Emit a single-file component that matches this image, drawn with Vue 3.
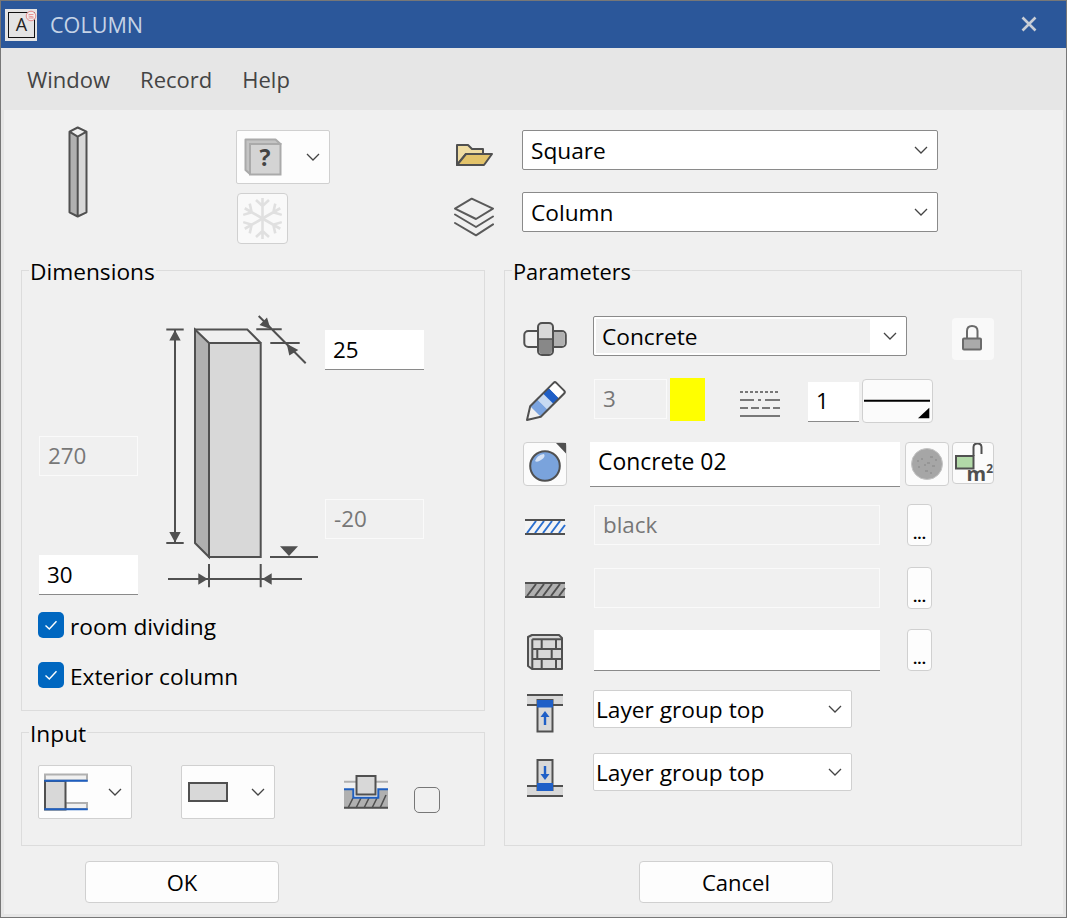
<template>
  <div class="window">
    <svg class="defs">
      <defs>
        <symbol id="chev" viewBox="0 0 14 8">
          <path d="M1 1 L7 7 L13 1" fill="none" stroke="#444" stroke-width="1.3" />
        </symbol>
      </defs>
    </svg>

    <div class="titlebar">
      <div class="app-icon">
        <span class="app-letter">A</span>
        <svg class="app-badge" viewBox="0 0 12 12">
          <circle cx="6" cy="6" r="4.8" fill="#eee" stroke="#e58a8a" stroke-width="1" />
          <path d="M3.5 4.5 H8.5 M3.5 6 L8.5 7 M3.5 8 H8.5" stroke="#e58a8a" stroke-width="0.9" fill="none" />
        </svg>
      </div>
      <span class="title">COLUMN</span>
      <svg class="close" viewBox="0 0 16 16">
        <path d="M1.5 1.5 L14.5 14.5 M14.5 1.5 L1.5 14.5" stroke="#c9ced6" stroke-width="2.6" />
      </svg>
    </div>

    <div class="menu">
      <span>Window</span>
      <span>Record</span>
      <span>Help</span>
    </div>

    <div class="content">
      <div class="top">
        <svg class="col-icon" viewBox="68 126 20 92">
          <path d="M69.5 131.7 L77.7 136.7 V216.5 L69.5 212.3 Z" fill="#b0b0b0" />
          <path d="M86.5 131.7 L77.7 136.7 V216.5 L86.5 212.3 Z" fill="#d8d8d8" />
          <path d="M69.5 131.7 L77.7 127.5 L86.5 131.7 L77.7 136.7 Z M69.5 131.7 V212.3 L77.7 216.5 L86.5 212.3 V131.7 M77.7 136.7 V216.5" fill="none" stroke="#505050" stroke-width="2" stroke-linejoin="round" />
        </svg>

        <div class="tools">
          <div class="split split-q">
            <svg class="q-icon" viewBox="244 138 38 38">
              <path d="M245.5 139.5 H275.5 L280.5 144 H250 V174 L245.5 170 Z" fill="#c4c4c4" stroke="#aaa" stroke-width="2" stroke-linejoin="round" />
              <rect x="250" y="144" width="30.5" height="30.5" fill="#d4d4d4" stroke="#aaa" stroke-width="2" />
              <text x="265" y="166" text-anchor="middle" class="q-mark">?</text>
            </svg>
            <svg class="chev"><use href="#chev" /></svg>
          </div>
          <div class="freeze">
            <svg viewBox="-24.5 -24.5 49 49" width="49" height="49">
              <g v-for="a in [0, 60, 120, 180, 240, 300]" :key="a" :transform="`rotate(${a})`">
                <path d="M0 0 V-20.5 M-6.5 -18.5 L0 -12.5 L6.5 -18.5" fill="none" stroke="#e0e0e0" stroke-width="2.6" />
              </g>
            </svg>
          </div>
        </div>

        <div class="picks">
          <div class="pick">
            <svg class="pick-icon" viewBox="454 130 40 40">
              <path d="M457 165 V145 H468 L472 149 H483 V154 H466 L457 165 Z" fill="#efdca2" stroke="#505050" stroke-width="2" stroke-linejoin="round" />
              <path d="M457 165 L466 154 H492 L484 165 Z" fill="#e3c36a" stroke="#505050" stroke-width="2" stroke-linejoin="round" />
            </svg>
            <div class="select">Square<svg class="chev"><use href="#chev" /></svg></div>
          </div>
          <div class="pick">
            <svg class="pick-icon tall" viewBox="454 192 40 46">
              <path d="M471.7 198.7 L493 208.7 L476 219 L455 208.7 Z" fill="none" stroke="#5a5a5a" stroke-width="2" stroke-linejoin="round" />
              <path d="M455 214.5 L476 227 L493 216.5 M455 223 L476 235.3 L493 224.3" fill="none" stroke="#5a5a5a" stroke-width="2" stroke-linejoin="round" stroke-linecap="round" />
            </svg>
            <div class="select">Column<svg class="chev"><use href="#chev" /></svg></div>
          </div>
        </div>
      </div>

      <div class="main">
        <div class="left">
          <section class="group dims">
            <div class="legend">Dimensions</div>
            <div class="canvas">
              <svg class="drawing" viewBox="22 271 462 335" width="462" height="335">
                <g stroke="#505050" stroke-width="2" fill="none">
                  <path d="M195 329.5 L209 343 V557 L195 543 Z" fill="#b0b0b0" />
                  <rect x="209" y="343" width="51.7" height="214" fill="#d8d8d8" />
                  <path d="M195 329.5 H247.3 L260.7 343" />
                  <path d="M175 330 V543 M166.3 329.5 H183.7 M166.3 543 H183.7" />
                  <path d="M256.3 329.3 H281.7 M270.3 343 H299.7 M258.7 316 L305.7 363.3" />
                  <path d="M209 564 V587.3 M260.7 564 V587.3 M168 579 H302" />
                  <path d="M270 557 H318" />
                </g>
                <g fill="#505050">
                  <path d="M175 330 L169.3 340.5 H180.7 Z M175 542.5 L169.3 532 H180.7 Z" />
                  <path d="M270.5 329 L267 317.5 L259.5 325 Z M286.7 343.7 L298.3 350 L289.3 355.5 Z" />
                  <path d="M207.7 579 L198.3 573.3 V584.7 Z M262.3 579 L271.7 573.3 V584.7 Z" />
                  <path d="M280 546.3 H298 L289 556 Z" />
                </g>
              </svg>
              <div class="field at-25">25</div>
              <div class="field off at-270">270</div>
              <div class="field off at-20">-20</div>
              <div class="field at-30">30</div>
            </div>
            <div class="checks">
              <label class="check">
                <span class="box on">
                  <svg viewBox="0 0 14 14" width="14" height="14"><path d="M1.5 7.5 L5.3 11 L12.5 3.2" fill="none" stroke="#fff" stroke-width="1.4" /></svg>
                </span>
                <span>room dividing</span>
              </label>
              <label class="check">
                <span class="box on">
                  <svg viewBox="0 0 14 14" width="14" height="14"><path d="M1.5 7.5 L5.3 11 L12.5 3.2" fill="none" stroke="#fff" stroke-width="1.4" /></svg>
                </span>
                <span>Exterior column</span>
              </label>
            </div>
          </section>

          <section class="group input">
            <div class="legend">Input</div>
            <div class="split split-a">
              <svg class="split-icon" viewBox="42 772 46 40">
                <rect x="44" y="774.5" width="42" height="6" fill="#f0f0f0" stroke="#b0b0b0" stroke-width="2" />
                <rect x="64.5" y="803" width="21.5" height="6" fill="#f0f0f0" stroke="#b0b0b0" stroke-width="2" />
                <rect x="44" y="781" width="20.5" height="28.5" fill="#d8d8d8" stroke="#505050" stroke-width="2" />
                <path d="M43.3 780.8 H86.7 M43.3 809.3 H86.7" stroke="#1f5fc0" stroke-width="2" />
              </svg>
              <svg class="chev"><use href="#chev" /></svg>
            </div>
            <div class="split split-b">
              <svg class="split-icon" viewBox="186 772 46 40">
                <rect x="189" y="783" width="38" height="18" fill="#d8d8d8" stroke="#505050" stroke-width="2" />
              </svg>
              <svg class="chev"><use href="#chev" /></svg>
            </div>
            <svg class="found-icon" viewBox="343 774 46 36">
              <path d="M344 789.3 H353.3 V797.7 H378.3 V789.3 H388 V808.3 H344 Z" fill="#b0b0b0" />
              <path d="M348 808 L353 798 M356 808 L361 798 M364 808 L369 798 M372 808 L377 798 M380 808 L386 795" stroke="#505050" stroke-width="1.6" />
              <path d="M344 807.8 H388" stroke="#505050" stroke-width="2" />
              <path d="M344 781.7 H388" stroke="#b0b0b0" stroke-width="2" />
              <path d="M344 789.3 H353.3 V797.7 H378.3 V789.3 H388" fill="none" stroke="#1f5fc0" stroke-width="2" />
              <rect x="356.5" y="776" width="19" height="18.5" fill="#d8d8d8" stroke="#505050" stroke-width="2" />
            </svg>
            <span class="box empty"></span>
          </section>
        </div>

        <section class="group params">
          <div class="legend legend-params">Parameters</div>
          <div class="rows">
            <div class="row">
              <svg class="p-icon" viewBox="522 316 46 46">
                <rect x="524.3" y="331" width="41.5" height="16" rx="4" fill="#f0f0f0" stroke="#505050" stroke-width="2" />
                <path d="M552 332 H561.5 Q564.8 332 564.8 335 V343 Q564.8 346 561.5 346 H552 Z" fill="#b0b0b0" />
                <rect x="538" y="323" width="15" height="32" rx="4" fill="#d8d8d8" stroke="#505050" stroke-width="2" />
                <path d="M539 339 H552 V350 Q552 354 549 354 H542 Q539 354 539 350 Z" fill="#888" />
                <path d="M538 339 H553" stroke="#505050" stroke-width="1.5" />
              </svg>
              <div class="select concrete">
                <span class="sel-text">Concrete</span>
                <svg class="chev"><use href="#chev" /></svg>
              </div>
              <div class="btn-lock">
                <svg viewBox="0 0 42 42" width="42" height="42">
                  <path d="M15 21 V13 Q15 8 20 8 Q25.5 8 25.5 13 V21" fill="none" stroke="#6a6a6a" stroke-width="2" />
                  <rect x="11" y="20.5" width="18" height="11" rx="1" fill="#aaa" stroke="#6a6a6a" stroke-width="2" />
                </svg>
              </div>
            </div>

            <div class="row">
              <svg class="p-icon" viewBox="522 378 46 46">
                <g transform="translate(527 420) rotate(-45)">
                  <path d="M0 0 L12 -7.5 V7.5 Z" fill="#f0f0f0" />
                  <rect x="12" y="-7.5" width="10" height="15" fill="#7ba4e0" />
                  <rect x="22" y="-7.5" width="8" height="15" fill="#c8daf2" />
                  <rect x="30" y="-7.5" width="8" height="15" fill="#1f5fc7" />
                  <rect x="38" y="-7.5" width="9" height="15" fill="#fff" />
                  <path d="M0 0 L12 -7.5 H45 Q47 -7.5 47 -5.5 V5.5 Q47 7.5 45 7.5 H12 Z" fill="none" stroke="#505050" stroke-width="2" stroke-linejoin="round" />
                </g>
              </svg>
              <div class="field off pen-num">3</div>
              <div class="swatch"></div>
              <svg class="line-icon" viewBox="0 0 40 28">
                <path d="M0 2 H40" stroke="#505050" stroke-width="1.6" stroke-dasharray="3 2" />
                <path d="M0 10 H14 M18 10 H21 M25 10 H40" stroke="#505050" stroke-width="1.6" fill="none" />
                <path d="M0 18 H40" stroke="#505050" stroke-width="1.6" stroke-dasharray="8 3" />
                <path d="M0 26 H40" stroke="#505050" stroke-width="1.6" />
              </svg>
              <div class="field line-num">1</div>
              <div class="btn-line">
                <svg viewBox="863 380 69 42" width="69" height="42">
                  <path d="M864 400.7 H930" stroke="#000" stroke-width="2" />
                  <path d="M918 418.3 H929.3 V407.7 Z" fill="#000" />
                </svg>
              </div>
            </div>

            <div class="row">
              <div class="btn-mat">
                <svg viewBox="524 444 42 42" width="42" height="42">
                  <circle cx="545" cy="467" r="14.8" fill="#7aa3dc" stroke="#505050" stroke-width="2" />
                  <path d="M535 462 Q537 456 544 455 Q546 458 541 461 Q537 464 535 462 Z" fill="#d6e3f6" />
                  <path d="M556 444 H566 V454.5 Z" fill="#505050" />
                </svg>
              </div>
              <div class="field mat-name">Concrete 02</div>
              <div class="btn-tex">
                <svg viewBox="-21 -21 42 42" width="42" height="42">
                  <circle r="15.5" fill="#a6a6a6" stroke="#c4c4c4" stroke-width="1" />
                  <path d="M-6 -5 h2 M3 -7 h3 M-9 3 h2 M5 2 h3 M-2 7 h3 M0 -1 h3 M-3 1 h2 M-10 -3 h2 M8 -4 h2 M3 9 h2" stroke="#919191" stroke-width="1.6" />
                </svg>
              </div>
              <div class="btn-m2">
                <svg viewBox="953 444 40 40" width="40" height="40">
                  <path d="M973.5 457 V448 Q973.5 444.5 977.5 444.5 Q981.5 444.5 981.5 448 V455" fill="none" stroke="#505050" stroke-width="2" />
                  <rect x="956" y="457" width="17.5" height="12.5" fill="#b2d9a8" stroke="#505050" stroke-width="2" />
                </svg>
                <span class="m2">m<sup>2</sup></span>
              </div>
            </div>

            <div class="row">
              <svg class="p-icon" viewBox="522 504 46 46">
                <rect x="525" y="520" width="40" height="14" fill="#f4f4f4" />
                <path d="M527 533 L536 521 M535 533 L544 521 M543 533 L552 521 M551 533 L560 521 M559 533 L565 525" stroke="#2a6fd0" stroke-width="2" />
                <path d="M525 520 H565 M525 534 H565" stroke="#505050" stroke-width="2" />
              </svg>
              <div class="field off wide">black</div>
              <div class="btn-more"><span>...</span></div>
            </div>

            <div class="row">
              <svg class="p-icon" viewBox="522 567 46 46">
                <rect x="525" y="583" width="40" height="14" fill="#b0b0b0" />
                <path d="M527 596 L536 584 M535 596 L544 584 M543 596 L552 584 M551 596 L560 584 M559 596 L565 588" stroke="#505050" stroke-width="2" />
                <path d="M525 583 H565 M525 597 H565" stroke="#505050" stroke-width="2" />
              </svg>
              <div class="field off wide"></div>
              <div class="btn-more"><span>...</span></div>
            </div>

            <div class="row">
              <svg class="p-icon" viewBox="522 629 46 46">
                <path d="M528 637 L532 635 H559 L562 638 V669 H532 L528 666 Z" fill="#d8d8d8" stroke="#505050" stroke-width="2" stroke-linejoin="round" />
                <path d="M532.3 639.3 H562 M532.3 639.3 V669 M532.3 649 H562 M532.3 659 H562 M541.7 639 V649 M556 639 V649 M537.3 649 V659 M551.7 649 V659 M541.7 659 V669 M556 659 V669" fill="none" stroke="#505050" stroke-width="2" />
              </svg>
              <div class="field wide brick"></div>
              <div class="btn-more"><span>...</span></div>
            </div>

            <div class="row">
              <svg class="p-icon" viewBox="522 690 46 46">
                <rect x="527" y="695" width="36" height="10" fill="#d8d8d8" />
                <path d="M527 695 H563 M527 705 H563" stroke="#505050" stroke-width="2" />
                <rect x="537.5" y="700" width="15" height="31.5" fill="#d8d8d8" stroke="#505050" stroke-width="2" />
                <rect x="537" y="700" width="16" height="7.5" fill="#1f5fc7" />
                <path d="M545 725 V716" stroke="#1f5fc7" stroke-width="2.4" />
                <path d="M540.5 717 L545 711 L549.5 717 Z" fill="#1f5fc7" />
              </svg>
              <div class="select layer">Layer group top<svg class="chev"><use href="#chev" /></svg></div>
            </div>

            <div class="row">
              <svg class="p-icon" viewBox="522 753 46 46">
                <rect x="527" y="786" width="36" height="10" fill="#d8d8d8" />
                <path d="M527 786 H563 M527 796 H563" stroke="#505050" stroke-width="2" />
                <rect x="537.5" y="760" width="15" height="30" fill="#d8d8d8" stroke="#505050" stroke-width="2" />
                <rect x="537" y="783" width="16" height="8" fill="#1f5fc7" />
                <path d="M545 766 V775" stroke="#1f5fc7" stroke-width="2.4" />
                <path d="M540.5 774 L545 780 L549.5 774 Z" fill="#1f5fc7" />
              </svg>
              <div class="select layer">Layer group top<svg class="chev"><use href="#chev" /></svg></div>
            </div>
          </div>
        </section>
      </div>

      <div class="footer">
        <button class="action">OK</button>
        <button class="action">Cancel</button>
      </div>
    </div>
  </div>
</template>

<script setup>
</script>

<style>
html, body {
  margin: 0;
  background: #e6e6e6;
}
</style>

<style scoped>
.window {
  width: 1067px;
  height: 918px;
  box-sizing: border-box;
  border: 1px solid #777;
  background: #e6e6e6;
  display: flex;
  flex-direction: column;
  font-family: "Open Sans", "Noto Sans", sans-serif;
  font-size: 22.7px;
  color: #000;
  overflow: hidden;
}

.defs {
  width: 0;
  height: 0;
  position: absolute;
}

.titlebar {
  height: 47px;
  flex: none;
  background: #2b579a;
  display: flex;
  align-items: center;
  padding-left: 4px;
}

.app-icon {
  width: 32px;
  height: 32px;
  background: #e4e4e4;
  position: relative;
  flex: none;
}

.app-letter {
  position: absolute;
  left: 3px;
  top: 3px;
  width: 27px;
  height: 26px;
  box-sizing: border-box;
  border: 1.5px solid #111;
  text-align: center;
  font-size: 18px;
  line-height: 22px;
  color: #222;
}

.app-badge {
  position: absolute;
  right: 0;
  top: 1px;
  width: 12px;
  height: 12px;
}

.title {
  margin-left: 13px;
  color: #c5d3e6;
  font-size: 21.6px;
}

.close {
  width: 16px;
  height: 16px;
  margin-left: auto;
  margin-right: 29px;
  margin-top: -2px;
}

.menu {
  height: 62px;
  flex: none;
  display: flex;
  align-items: center;
  gap: 30px;
  padding-left: 26px;
  color: #444;
  font-size: 22px;
}

.content {
  flex: 1;
  margin: 0 3px 3px;
  background: #f0f0f0;
  min-height: 0;
}

.top {
  height: 160px;
  box-sizing: border-box;
  padding: 20px 0 0 64px;
  display: flex;
  align-items: flex-start;
}

.col-icon {
  width: 20px;
  height: 92px;
  margin-top: -4px;
  flex: none;
}

.tools {
  margin-left: 148px;
  display: flex;
  flex-direction: column;
  gap: 9px;
  flex: none;
}

.split {
  width: 94px;
  height: 54px;
  box-sizing: border-box;
  background: #fdfdfd;
  border: 1px solid #d0d0d0;
  border-radius: 2px;
  display: flex;
  align-items: center;
  justify-content: space-between;
  padding-right: 9px;
}

.chev {
  width: 14px;
  height: 8px;
  flex: none;
}

.split-q {
  padding-left: 7px;
}

.q-icon {
  width: 38px;
  height: 38px;
}

.q-mark {
  font-size: 23px;
  font-weight: 700;
  fill: #444;
}

.freeze {
  width: 51px;
  height: 51px;
  margin-left: 1px;
  box-sizing: border-box;
  background: #f9f9f9;
  border: 1px solid #d0d0d0;
  border-radius: 4px;
}

.picks {
  margin-left: 124px;
  display: flex;
  flex-direction: column;
  gap: 22px;
}

.pick {
  display: flex;
  align-items: flex-start;
  height: 40px;
}

.pick-icon {
  width: 40px;
  height: 40px;
  flex: none;
  margin-right: 28px;
}

.pick-icon.tall {
  height: 46px;
}

.select {
  width: 416px;
  height: 40px;
  box-sizing: border-box;
  background: #fff;
  border: 1px solid #8a8a8a;
  border-radius: 2px;
  display: flex;
  align-items: center;
  justify-content: space-between;
  padding: 0 9px 0 8px;
}

.main {
  display: grid;
  grid-template-columns: 464px 518px;
  column-gap: 19px;
  padding-left: 17px;
}

.left {
  display: flex;
  flex-direction: column;
  gap: 21px;
}

.group {
  position: relative;
  box-sizing: border-box;
  border: 1px solid #dcdcdc;
}

.legend {
  position: absolute;
  left: 7px;
  top: -12px;
  background: #f0f0f0;
  padding: 0 1px;
  line-height: 26px;
}

.legend-params {
  font-size: 21.8px;
}

.dims {
  height: 441px;
}

.canvas {
  position: relative;
  height: 335px;
}

.drawing {
  display: block;
}

.field {
  box-sizing: border-box;
  height: 40px;
  background: #fff;
  border-bottom: 1px solid #8a8a8a;
  display: flex;
  align-items: center;
  padding: 0 0 2px 8px;
  font-size: 22.4px;
}

.field.off {
  background: #f0f0f0;
  border: 1px solid #fafafa;
  color: #777;
}

.at-25, .at-270, .at-20, .at-30 {
  position: absolute;
  width: 99px;
}

.at-25 { left: 303px; top: 59px; padding-bottom: 0; }
.at-270 { left: 17px; top: 165px; }
.at-20 { left: 303px; top: 228px; }
.at-30 { left: 17px; top: 284px; padding-bottom: 0; }

.checks {
  padding: 6px 0 0 16px;
  display: flex;
  flex-direction: column;
  gap: 24px;
}

.check {
  display: flex;
  align-items: center;
  gap: 6px;
  height: 26px;
}

.check span:last-child {
  padding-top: 2px;
}

.box {
  width: 26px;
  height: 26px;
  box-sizing: border-box;
  border-radius: 5px;
  display: flex;
  align-items: center;
  justify-content: center;
  flex: none;
}

.box.on {
  background: #0067c0;
}

.box.empty {
  border: 1.5px solid #777;
  margin: 22px 0 0 25px;
}

.input {
  height: 114px;
  display: flex;
  align-items: flex-start;
  padding: 32px 0 0 16px;
}

.split-a {
  flex: none;
  padding-left: 4px;
}

.split-b {
  flex: none;
  margin-left: 49px;
  padding-left: 4px;
}

.split-icon {
  width: 46px;
  height: 40px;
}

.found-icon {
  width: 46px;
  height: 36px;
  flex: none;
  margin: 9px 0 0 68px;
}

.params {
  height: 576px;
}

.rows {
  display: grid;
  grid-template-rows: 62px 64px 62px 63px 62px 61px 63px 46px;
  padding: 45px 0 0 17px;
}

.row {
  display: flex;
  align-items: flex-start;
}

.p-icon {
  width: 46px;
  height: 46px;
  flex: none;
}

.select.concrete {
  width: 314px;
  margin-left: 25px;
  padding: 0 9px 0 2px;
}

.sel-text {
  width: 274px;
  height: 34px;
  box-sizing: border-box;
  padding-left: 6px;
  background: #f0f0f0;
  display: flex;
  align-items: center;
}

.btn-lock {
  width: 42px;
  height: 42px;
  margin: 2px 0 0 45px;
  background: #f9f9f9;
  border-radius: 4px;
}

.pen-num {
  width: 73px;
  margin: 1px 0 0 26px;
}

.swatch {
  width: 35px;
  height: 43px;
  margin-left: 3px;
  background: #ff0;
}

.line-icon {
  width: 40px;
  height: 28px;
  margin: 12px 0 0 35px;
}

.line-num {
  width: 51px;
  margin: 4px 0 0 28px;
}

.btn-line {
  width: 71px;
  height: 44px;
  box-sizing: border-box;
  margin: 1px 0 0 3px;
  background: #fbfbfb;
  border: 1px solid #d0d0d0;
  border-radius: 4px;
}

.btn-mat {
  width: 44px;
  height: 44px;
  margin-left: 1px;
  box-sizing: border-box;
  background: #fbfbfb;
  border: 1px solid #d0d0d0;
  border-radius: 4px;
  flex: none;
}

.mat-name {
  width: 310px;
  height: 45px;
  margin-left: 23px;
  padding-bottom: 5px;
  font-size: 22.9px;
}

.btn-tex {
  width: 44px;
  height: 44px;
  margin-left: 5px;
  box-sizing: border-box;
  background: #fbfbfb;
  border: 1px solid #d0d0d0;
  border-radius: 4px;
}

.btn-m2 {
  position: relative;
  width: 42px;
  height: 42px;
  margin-left: 3px;
  box-sizing: border-box;
  background: #fbfbfb;
  border: 1px solid #d0d0d0;
  border-radius: 4px;
}

.m2 {
  position: absolute;
  right: 0;
  bottom: -1px;
  font-size: 20px;
  font-weight: 700;
  line-height: 20px;
  color: #505050;
}

.m2 sup {
  font-size: 12px;
  line-height: 0;
}

.wide {
  width: 286px;
  margin: 1px 0 0 26px;
}

.brick {
  height: 41px;
}

.btn-more {
  width: 25px;
  height: 42px;
  box-sizing: border-box;
  margin-left: 27px;
  background: #fdfdfd;
  border: 1px solid #d0d0d0;
  border-radius: 4px;
  display: flex;
  justify-content: center;
  align-items: flex-end;
  font-weight: 700;
  font-size: 15px;
  line-height: 24px;
}

.select.layer {
  width: 259px;
  height: 38px;
  margin-left: 25px;
  padding: 0 9px 0 2px;
  border-color: #d0d0d0;
}

.footer {
  display: flex;
  gap: 360px;
  padding: 15px 0 0 81px;
}

.action {
  width: 194px;
  height: 42px;
  background: #fdfdfd;
  border: 1px solid #d0d0d0;
  border-radius: 4px;
  font: inherit;
  font-size: 22px;
  color: #000;
  padding: 0;
}
</style>
